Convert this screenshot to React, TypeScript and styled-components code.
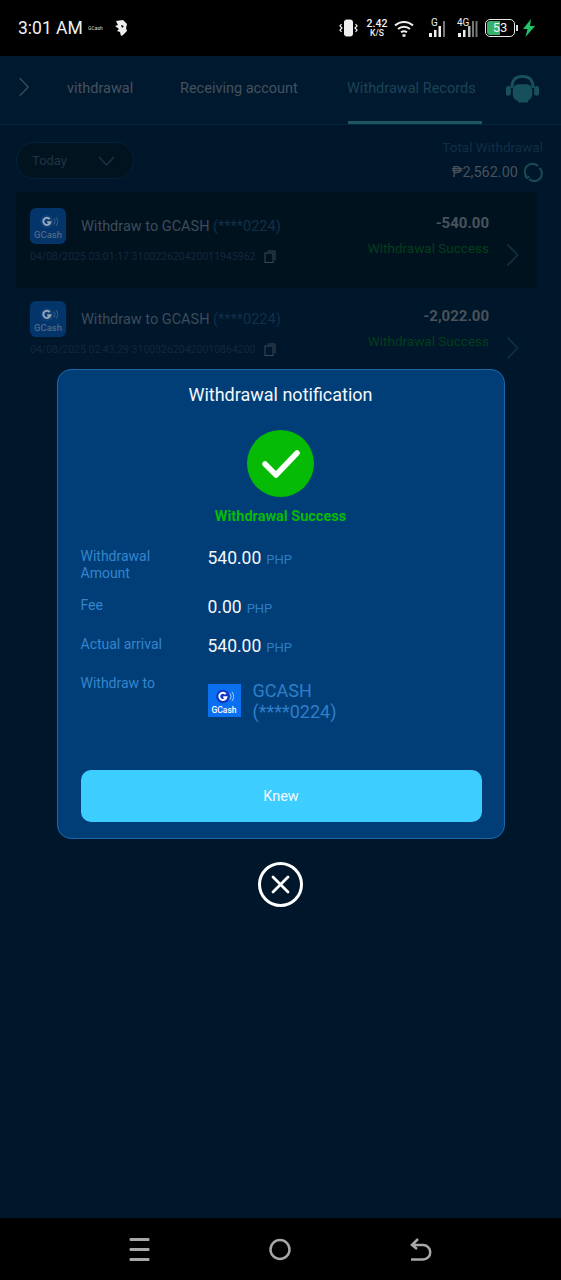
import styled, { createGlobalStyle } from "styled-components";

const GlobalStyle = createGlobalStyle`
  html, body {
    margin: 0;
    padding: 0;
    background: #000;
  }
  * {
    box-sizing: border-box;
  }
`;

const Screen = styled.div`
  width: 561px;
  height: 1280px;
  display: flex;
  flex-direction: column;
  overflow: hidden;
  font-family: Roboto, "Liberation Sans", sans-serif;
  background: #000;
`;

const StatusBar = styled.div`
  height: 56px;
  flex: none;
  display: flex;
  align-items: center;
  justify-content: space-between;
  padding: 0 25px 0 18px;
  background: #000;
  color: #f2f2f2;
`;

const StatusLeft = styled.div`
  display: flex;
  align-items: center;
`;

const Time = styled.span`
  font-size: 17.5px;
  width: 70px;
  white-space: nowrap;
`;

const TinyBrand = styled.span`
  font-size: 5px;
  width: 26px;
  color: #ddd;
`;

const StatusRight = styled.div`
  display: flex;
  align-items: center;
`;

const Speed = styled.div`
  width: 20px;
  margin: 0 7px 0 9px;
  display: flex;
  flex-direction: column;
  align-items: center;
  font-size: 10.5px;
  font-weight: 500;
  line-height: 10px;
  white-space: nowrap;
  small {
    font-size: 8.5px;
    line-height: 9px;
  }
`;

const Battery = styled.div`
  width: 30px;
  height: 18px;
  margin-left: 7px;
  border: 1.5px solid #e8e8e8;
  border-radius: 5px;
  padding: 1px;
  position: relative;
  display: flex;
  span {
    width: 13px;
    background: #35b16a;
    border-radius: 3px 0 0 3px;
  }
  b {
    position: absolute;
    inset: 0;
    text-align: center;
    font-size: 13px;
    font-weight: 400;
    line-height: 15px;
  }
`;

const BatteryTip = styled.i`
  width: 2px;
  height: 6px;
  background: #ddd;
  margin: 0 4px 0 1px;
`;

const Page = styled.div`
  flex: 1;
  position: relative;
  background: #00162a;
  display: flex;
  flex-direction: column;
`;

const TopNav = styled.div`
  height: 69px;
  flex: none;
  display: flex;
  align-items: center;
  padding: 0 21px 3px 18px;
  background: #01192e;
  border-bottom: 1px solid #04243f;
  position: relative;
`;

const Tab = styled.div<{ $active?: boolean; $w: number }>`
  width: ${(p) => p.$w}px;
  flex: none;
  font-size: 14.5px;
  white-space: nowrap;
  color: ${(p) => (p.$active ? "#1d4358" : "#44525e")};
`;

const TabLine = styled.div`
  position: absolute;
  left: 348px;
  bottom: 0;
  width: 134px;
  height: 3px;
  background: #1d5560;
`;

const FilterRow = styled.div`
  display: flex;
  justify-content: space-between;
  padding: 14px 18px 0 16px;
  height: 67px;
  flex: none;
`;

const DatePill = styled.div`
  width: 118px;
  height: 37px;
  margin-top: 3px;
  border: 1px solid #03233a;
  border-radius: 19px;
  background: #00131f;
  display: flex;
  align-items: center;
  justify-content: space-between;
  padding: 0 18px 0 15px;
  font-size: 13px;
  color: #1e3546;
`;

const Totals = styled.div`
  display: flex;
  flex-direction: column;
  align-items: flex-end;
  gap: 7px;
`;

const TotalLabel = styled.div`
  font-size: 13.5px;
  line-height: 16px;
  color: #132e44;
`;

const TotalAmount = styled.div`
  display: flex;
  align-items: center;
  gap: 5px;
  font-size: 14.5px;
  color: #46525d;
`;

const Record = styled.div<{ $dark?: boolean }>`
  margin: 0 24px 0 16px;
  height: ${(p) => (p.$dark ? 96 : 80)}px;
  flex: none;
  padding: ${(p) => (p.$dark ? 16 : 13)}px 17px 0 14px;
  background: ${(p) => (p.$dark ? "#01121f" : "transparent")};
  display: flex;
  justify-content: space-between;
  position: relative;
`;

const RecordMain = styled.div`
  display: flex;
  flex-direction: column;
  gap: 6px;
`;

const RecordHead = styled.div`
  display: flex;
  align-items: center;
  gap: 15px;
`;

const RecordTitle = styled.div`
  font-size: 14.5px;
  color: #3d4c5a;
  span {
    color: #123049;
  }
`;

const RecordMeta = styled.div`
  display: flex;
  align-items: center;
  gap: 8px;
  font-size: 10.5px;
  color: #12283c;
  white-space: nowrap;
`;

const RecordSide = styled.div`
  display: flex;
  align-items: flex-start;
  gap: 16px;
`;

const RecordNumbers = styled.div`
  display: flex;
  flex-direction: column;
  align-items: flex-end;
  gap: 8px;
  padding-top: 6px;
`;

const RecordAmount = styled.div`
  font-size: 15px;
  line-height: 18px;
  font-weight: 700;
  color: #48525b;
`;

const RecordStatus = styled.div`
  font-size: 13.5px;
  line-height: 16px;
  color: #033f1a;
`;

const LogoBox = styled.div<{ $size: number; $dim?: boolean }>`
  width: ${(p) => p.$size}px;
  height: ${(p) => p.$size}px;
  flex: none;
  border-radius: ${(p) => (p.$dim ? 6 : 0)}px;
  background: ${(p) => (p.$dim ? "#03356b" : "#0a70f0")};
  display: flex;
  flex-direction: column;
  align-items: center;
  justify-content: center;
  color: ${(p) => (p.$dim ? "#4f6a85" : "#fff")};
  font-size: ${(p) => (p.$dim ? 9.5 : 8.5)}px;
  font-weight: 500;
  line-height: 10px;
  padding-top: 2px;
  svg {
    margin-bottom: 1px;
  }
`;

const Overlay = styled.div`
  position: absolute;
  inset: 0;
  padding-top: 313px;
  display: flex;
  flex-direction: column;
  align-items: center;
`;

const Modal = styled.div`
  width: 448px;
  height: 470px;
  border: 1.5px solid #1b69ab;
  border-radius: 14px;
  background: #013e78;
  padding: 14px 23px 0;
  display: flex;
  flex-direction: column;
`;

const ModalTitle = styled.div`
  font-size: 18px;
  line-height: 22px;
  text-align: center;
  color: #f4f8fc;
`;

const SuccessBadge = styled.div`
  width: 67px;
  height: 67px;
  margin: 24px auto 0;
  border-radius: 50%;
  background: #05bb05;
  display: flex;
  align-items: center;
  justify-content: center;
`;

const SuccessText = styled.div`
  margin-top: 11px;
  font-size: 14.5px;
  line-height: 17px;
  font-weight: 700;
  text-align: center;
  color: #05bb05;
`;

const DetailGrid = styled.div`
  margin-top: 23px;
  display: grid;
  grid-template-columns: 127px 1fr;
`;

const DetailLabel = styled.div<{ $h: number }>`
  height: ${(p) => p.$h}px;
  font-size: 14px;
  line-height: 17px;
  color: #3585cb;
`;

const DetailValue = styled.div`
  font-size: 17.5px;
  line-height: 20px;
  color: #f4f8fc;
  white-space: nowrap;
  small {
    margin-left: 5px;
    font-size: 13px;
    color: #2d7cc4;
  }
`;

const Payee = styled.div`
  display: flex;
  align-items: center;
  gap: 12px;
  font-size: 18px;
  line-height: 21px;
  color: #2f7fc8;
`;

const KnewButton = styled.button`
  margin-top: 44px;
  height: 52px;
  width: 401px;
  flex: none;
  border: 0;
  border-radius: 10px;
  background: #3dcdff;
  color: #f2fbff;
  font-family: inherit;
  font-size: 14.5px;
`;

const CloseButton = styled.div`
  margin-top: 23px;
  width: 45px;
  height: 45px;
  border: 3px solid #fff;
  border-radius: 50%;
  display: flex;
  align-items: center;
  justify-content: center;
`;

const NavBar = styled.div`
  height: 62px;
  flex: none;
  background: #000;
  display: flex;
  align-items: center;
  justify-content: center;
  gap: 119px;
  padding-bottom: 0;
`;

function GCashLogo({ size, dim }: { size: number; dim?: boolean }) {
  const ring = dim ? "#9aa7b5" : "#fff";
  return (
    <LogoBox $size={size} $dim={dim}>
      <svg width="19" height="15" viewBox="0 0 19 15" fill="none">
        <circle cx="8" cy="7.5" r="6.8" fill={dim ? "#0b3f78" : "#0c37c8"} />
        <path d="M10.7 5.1A3.6 3.6 0 1 0 11.4 8.2H8.2" stroke={ring} strokeWidth="2" />
        <path d="M15 4.5a5 5 0 0 1 0 6M17 3a7.5 7.5 0 0 1 0 9" stroke={dim ? "#3f5f85" : "#a9d0ff"} strokeWidth="1" />
      </svg>
      GCash
    </LogoBox>
  );
}

function Chevron({ color, w, h }: { color: string; w: number; h: number }) {
  return (
    <svg width={w} height={h} viewBox="0 0 14 26" fill="none">
      <path d="M1.5 1.5 12.5 13 1.5 24.5" stroke={color} strokeWidth="1.8" />
    </svg>
  );
}

function CopyIcon() {
  return (
    <svg width="12" height="13" viewBox="0 0 12 13" fill="none" stroke="#3a4a58" strokeWidth="1">
      <rect x="1" y="3" width="8" height="9.5" />
      <path d="M3.5 1H11v9.5" />
    </svg>
  );
}

function RecordRow({ dark, amount, meta }: { dark?: boolean; amount: string; meta: string }) {
  return (
    <Record $dark={dark}>
      <RecordMain>
        <RecordHead>
          <GCashLogo size={36} dim />
          <RecordTitle>
            Withdraw to GCASH <span>(****0224)</span>
          </RecordTitle>
        </RecordHead>
        <RecordMeta>
          {meta}
          <CopyIcon />
        </RecordMeta>
      </RecordMain>
      <RecordSide>
        <RecordNumbers>
          <RecordAmount>{amount}</RecordAmount>
          <RecordStatus>Withdrawal Success</RecordStatus>
        </RecordNumbers>
        <div style={{ paddingTop: 35 }}>
          <Chevron color="#12303f" w={15} h={24} />
        </div>
      </RecordSide>
    </Record>
  );
}

export default function App() {
  return (
    <Screen>
      <GlobalStyle />
      <StatusBar>
        <StatusLeft>
          <Time>3:01 AM</Time>
          <TinyBrand>GCash</TinyBrand>
          <svg width="14" height="16" viewBox="0 0 14 16" fill="#eee">
            <path d="M2 1 9 0l4 4-1 4 1 3-4 4-2 1-1-4-3-1 2-2-4-3 3-1z" />
            <path d="M7 5l3 1-2 2z" fill="#000" />
          </svg>
        </StatusLeft>
        <StatusRight>
          <svg width="19" height="18" viewBox="0 0 19 18" fill="none" stroke="#eee">
            <rect x="5.5" y="1" width="8" height="16" rx="2" fill="#eee" />
            <path d="M2.5 5 1 7l2 2-2 2 1.5 2M16.5 5 18 7l-2 2 2 2-1.500 2" strokeWidth="1.2" />
          </svg>
          <Speed>
            2.42
            <small>K/S</small>
          </Speed>
          <svg width="20" height="17" viewBox="0 0 20 17" fill="none" stroke="#eee" strokeWidth="2">
            <path d="M1 5.500a13 13 0 0 1 18 0M4 9a9 9 0 0 1 12 0M7 12.300a5 5 0 0 1 6 0" />
            <path d="M8.500 15.500h3" strokeWidth="2.500" />
          </svg>
          <svg width="20" height="20" viewBox="0 0 20 20" style={{ marginLeft: 15 }} fill="#eee">
            <text x="2" y="8" fontSize="10" fontFamily="Roboto">G</text>
            <rect x="0" y="15" width="3" height="4" />
            <rect x="5" y="12" width="2.500" height="7" />
            <rect x="9.500" y="8" width="2.500" height="11" />
            <rect x="14" y="3" width="2" height="16" fill="#777" />
          </svg>
          <svg width="21" height="20" viewBox="0 0 21 20" style={{ marginLeft: 8 }} fill="#eee">
            <text x="0" y="8" fontSize="10" fontFamily="Roboto">4G</text>
            <rect x="1" y="15" width="3" height="4" />
            <rect x="6" y="12" width="2.500" height="7" />
            <rect x="11" y="8" width="2.500" height="11" fill="#bbb" />
            <rect x="15" y="3" width="2" height="16" fill="#777" />
            <rect x="18.500" y="3" width="2" height="16" fill="#777" />
          </svg>
          <Battery>
            <span />
            <b>53</b>
          </Battery>
          <BatteryTip />
          <svg width="14" height="18" viewBox="0 0 14 18" fill="#1fc46b">
            <path d="M9 0 1 10h4.500L3.500 18 13 7H8z" />
          </svg>
        </StatusRight>
      </StatusBar>

      <Page>
        <TopNav>
          <Tab $w={49}>
            <Chevron color="#3a4b58" w={12} h={20} />
          </Tab>
          <Tab $w={113}>vithdrawal</Tab>
          <Tab $w={167}>Receiving account</Tab>
          <Tab $w={158} $active>
            Withdrawal Records
          </Tab>
          <svg width="36" height="32" viewBox="0 0 36 32" fill="none">
            <path d="M7 15C7 7 11 3 18 3s11 4 11 12" stroke="#17505c" strokeWidth="3" />
            <rect x="8" y="11" width="20" height="17" rx="6" fill="#17505c" />
            <rect x="1" y="13" width="5" height="10" rx="2.500" fill="#17505c" />
            <rect x="30" y="13" width="5" height="10" rx="2.500" fill="#17505c" />
            <rect x="13" y="26" width="11" height="4" rx="2" fill="#17505c" />
          </svg>
          <TabLine />
        </TopNav>

        <FilterRow>
          <DatePill>
            Today
            <svg width="17" height="10" viewBox="0 0 17 10" fill="none" stroke="#1b3244" strokeWidth="1.500">
              <path d="M1 1l7.500 8L16 1" />
            </svg>
          </DatePill>
          <Totals>
            <TotalLabel>Total Withdrawal</TotalLabel>
            <TotalAmount>
              ₱2,562.00
              <svg width="20" height="20" viewBox="0 0 20 20" fill="none" stroke="#1b4a55" strokeWidth="2">
                <path d="M4 15A7.500 7.500 0 0 1 15 4M16.500 6A7.500 7.500 0 0 1 6 17" />
                <path d="M2 13.500l2 2.500 2.500-1.500" />
              </svg>
            </TotalAmount>
          </Totals>
        </FilterRow>

        <RecordRow dark amount="-540.00" meta="04/08/2025 03:01:17   310022620420011945962" />
        <RecordRow amount="-2,022.00" meta="04/08/2025 02:43:29   310032620420010864200" />

        <Overlay>
          <Modal>
            <ModalTitle>Withdrawal notification</ModalTitle>
            <SuccessBadge>
              <svg width="38" height="30" viewBox="0 0 38 30" fill="none">
                <path d="M3 15l11 11L35 4" stroke="#fff" strokeWidth="5.500" strokeLinecap="round" strokeLinejoin="round" />
              </svg>
            </SuccessBadge>
            <SuccessText>Withdrawal Success</SuccessText>
            <DetailGrid>
              <DetailLabel $h={49}>
                Withdrawal
                <br />
                Amount
              </DetailLabel>
              <DetailValue>
                540.00<small>PHP</small>
              </DetailValue>
              <DetailLabel $h={39}>Fee</DetailLabel>
              <DetailValue>
                0.00<small>PHP</small>
              </DetailValue>
              <DetailLabel $h={39}>Actual arrival</DetailLabel>
              <DetailValue>
                540.00<small>PHP</small>
              </DetailValue>
              <DetailLabel $h={51}>Withdraw to</DetailLabel>
              <Payee>
                <GCashLogo size={33} />
                <div>
                  GCASH
                  <br />
                  (****0224)
                </div>
              </Payee>
            </DetailGrid>
            <KnewButton>Knew</KnewButton>
          </Modal>
          <CloseButton>
            <svg width="19" height="19" viewBox="0 0 19 19" fill="none">
              <path d="M2 2l15 15M17 2 2 17" stroke="#fff" strokeWidth="2.800" strokeLinecap="round" />
            </svg>
          </CloseButton>
        </Overlay>
      </Page>

      <NavBar>
        <svg width="21" height="23" viewBox="0 0 21 23" fill="#a8a8a8">
          <rect x="0.500" y="0" width="20" height="3" rx="1" />
          <rect x="0.500" y="10" width="20" height="3" rx="1" />
          <rect x="0.500" y="20" width="20" height="3" rx="1" />
        </svg>
        <svg width="22" height="23" viewBox="0 0 22 23" fill="none" stroke="#a8a8a8" strokeWidth="2.500">
          <circle cx="11" cy="11.500" r="9.500" />
        </svg>
        <svg width="22" height="23" viewBox="0 0 22 23" fill="none" stroke="#a8a8a8" strokeWidth="2.500">
          <path d="M1 21.500h12a7 7 0 0 0 0-14.500H2M8 1 2 7l5 4" />
        </svg>
      </NavBar>
    </Screen>
  );
}
